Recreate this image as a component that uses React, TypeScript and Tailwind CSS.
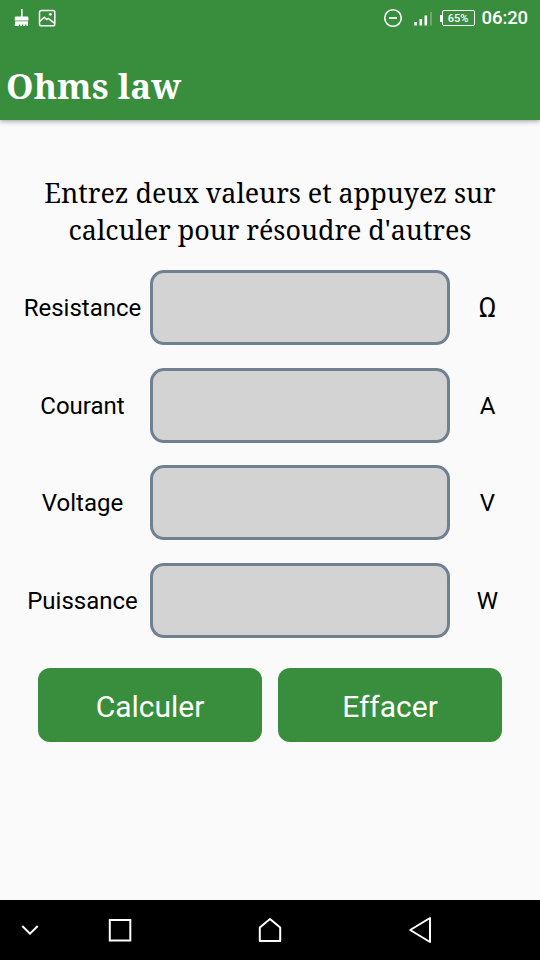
const fields = [
  { label: "Resistance", unit: "Ω", unitClass: "text-[27px] leading-none" },
  { label: "Courant", unit: "A", unitClass: "" },
  { label: "Voltage", unit: "V", unitClass: "" },
  { label: "Puissance", unit: "W", unitClass: "" },
];

const actions = ["Calculer", "Effacer"];

function StatusBar() {
  return (
    <div className="flex h-9 items-center justify-between pl-[14px] pr-3">
      <div className="flex items-center gap-[9px]">
        {/* Cleaner */}
        <svg viewBox="0 0 15 18" fill="#fff" className="h-[18px] w-[15px]">
          <path d="M7 0h1.6v7.5H13c1 0 1.4.5 1.4 1.3v2.7H.8V8.8C.8 8 1.2 7.5 2.2 7.5H7zM1.2 12.3H14V17h-1.700v-1.500h-1.400V17H9.300v-1.500H7.900V17H6.200v-1.500H4.800V17H.7z" />
        </svg>
        {/* Picture */}
        <svg viewBox="0 0 18 18" fill="none" stroke="#fff" strokeWidth={1.5} className="h-[18px] w-[18px]">
          <rect x="1.5" y="1.5" width="15.3" height="15.3" rx="1.8" />
          <path d="M2 12.3l4.2-4.1 2.5 2.4 1.5-1.2 6.200 4.800" />
          <circle cx="12.3" cy="5.3" r="1.4" fill="#fff" stroke="none" />
        </svg>
      </div>
      <div className="flex items-center">
        <svg viewBox="0 0 20 20" fill="none" stroke="#fff" className="h-5 w-5">
          <circle cx="10" cy="10" r="8.3" strokeWidth={1.6} />
          <path d="M6 10h8" strokeWidth={1.8} />
        </svg>
        <svg viewBox="0 0 20 16" fill="#fff" className="ml-2.5 h-4 w-5">
          <rect x="1.3" y="12" width="2.6" height="3.5" />
          <rect x="6.500" y="9" width="2.6" height="6.5" />
          <rect x="11.500" y="5.5" width="2.6" height="10" />
          <rect x="17" y="2" width="2" height="13.5" opacity="0.25" />
        </svg>
        <div className="ml-[7px] h-[7px] w-0.5 bg-white" />
        <div className="flex h-4 w-[33px] items-center justify-center rounded-[2px] border-[1.5px] border-white text-[11px] font-medium leading-none">
          65%
        </div>
        <span className="ml-[7px] pt-px text-[18.5px] font-medium leading-none tracking-[-0.1px]">06:20</span>
      </div>
    </div>
  );
}

function NavBar() {
  return (
    <nav className="flex h-[60px] items-center bg-black">
      <svg viewBox="0 0 60 60" fill="none" stroke="#fff" strokeWidth={2} className="h-[60px] w-[60px]">
        <path d="M22.3 26l7.7 7.7 7.7-7.7" />
      </svg>
      <svg viewBox="0 0 60 60" fill="none" stroke="#fff" strokeWidth={2} className="ml-[30px] h-[60px] w-[60px]">
        <rect x="19.8" y="20" width="20.5" height="20.5" />
      </svg>
      <svg viewBox="0 0 60 60" fill="none" stroke="#fff" strokeWidth={2} strokeLinejoin="round" className="ml-[90px] h-[60px] w-[60px]">
        <path d="M19.8 41V27.500L30 19l10.200 8.500V41z" />
      </svg>
      <svg viewBox="0 0 60 60" fill="none" stroke="#fff" strokeWidth={2} strokeLinejoin="round" className="ml-[90px] h-[60px] w-[60px]">
        <path d="M40 18v24L20.2 30z" />
      </svg>
    </nav>
  );
}

export default function App() {
  return (
    <div className="flex h-[960px] w-[540px] flex-col overflow-hidden bg-[#fafafa] font-['Roboto',sans-serif] text-black">
      <header className="h-[120px] shrink-0 bg-[#388e3c] text-white shadow-[0_1px_5px_rgba(0,0,0,0.4)]">
        <StatusBar />
        <h1 className="mt-[28px] pl-1.5 font-['Noto_Serif',serif] text-[35px] font-bold leading-[44px] tracking-[0.1px]">
          Ohms law
        </h1>
      </header>

      <main className="flex-1 pt-[54px]">
        <p className="flex flex-col items-center whitespace-nowrap font-['Noto_Serif',serif] text-[26.9px] leading-[37px] tracking-[-0.03px]">
          <span>Entrez deux valeurs et appuyez sur</span>
          <span>calculer pour résoudre d'autres</span>
        </p>

        <div className="mt-[22px] flex flex-col gap-[22.5px]">
          {fields.map((field) => (
            <label key={field.label} className="flex h-[75px] items-center pl-[15px] text-[24px]">
              <span className="w-[135px] pt-px text-center">{field.label}</span>
              <input className="h-full w-[300px] rounded-[14px] border-[3px] border-[#708090] bg-[#d3d3d3] px-3" />
              <span className={`w-[75px] pt-px text-center ${field.unitClass}`}>{field.unit}</span>
            </label>
          ))}
        </div>

        <div className="mt-[30.5px] flex justify-center gap-4">
          {actions.map((action) => (
            <button
              key={action}
              className="h-[74px] w-56 rounded-xl bg-[#388e3c] pt-[3px] text-[30px] text-white"
            >
              {action}
            </button>
          ))}
        </div>
      </main>

      <NavBar />
    </div>
  );
}
